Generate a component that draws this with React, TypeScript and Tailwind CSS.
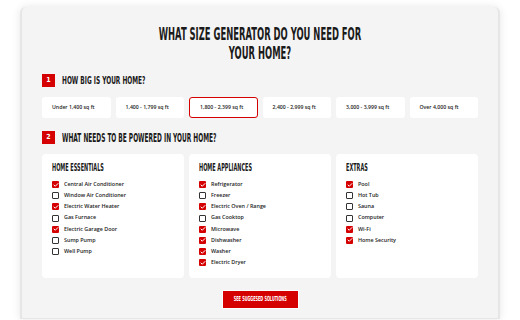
import { Check } from 'lucide-react'

const condensed = "font-['Liberation_Sans_Narrow','DejaVu_Sans_Condensed',sans-serif] font-bold"
const body = "font-['Open_Sans','Noto_Sans',sans-serif]"

const sizes = [
  'Under 1,400 sq ft',
  '1,400 - 1,799 sq ft',
  '1,800 - 2,399 sq ft',
  '2,400 - 2,999 sq ft',
  '3,000 - 3,999 sq ft',
  'Over 4,000 sq ft',
]

const groups = [
  {
    title: 'HOME ESSENTIALS',
    items: [
      ['Central Air Conditioner', true],
      ['Window Air Conditioner', false],
      ['Electric Water Heater', true],
      ['Gas Furnace', false],
      ['Electric Garage Door', true],
      ['Sump Pump', false],
      ['Well Pump', false],
    ],
  },
  {
    title: 'HOME APPLIANCES',
    items: [
      ['Refrigerator', true],
      ['Freezer', false],
      ['Electric Oven / Range', true],
      ['Gas Cooktop', false],
      ['Microwave', true],
      ['Dishwasher', true],
      ['Washer', true],
      ['Electric Dryer', true],
    ],
  },
  {
    title: 'EXTRAS',
    items: [
      ['Pool', true],
      ['Hot Tub', false],
      ['Sauna', false],
      ['Computer', false],
      ['Wi-Fi', true],
      ['Home Security', true],
    ],
  },
] as { title: string; items: [string, boolean][] }[]

const StepLabel = ({ n, text, big }: { n: number; text: string; big?: boolean }) => (
  <div className="flex h-[13px] items-center gap-[7px]">
    <div className={`flex h-[13px] w-[13px] items-center justify-center bg-[#d50000] text-[7px] leading-none text-white ${condensed}`}>
      {n}
    </div>
    <span
      className={`block origin-left whitespace-nowrap leading-[13px] text-[#1a1a1a] ${condensed} ${
        big ? 'text-[13px] scale-x-[0.5]' : 'text-[11px] scale-x-[0.59]'
      }`}
    >
      {text}
    </span>
  </div>
)

export default function App() {
  return (
    <div className="h-[320px] w-[520px] overflow-hidden bg-white">
      <div className="mx-[20px] mt-[7px] h-[312px] rounded-t-[6px] border-x-2 border-b border-[#e6e6e6] bg-[#f4f4f4] px-[20px] pt-[17px] shadow-[0_0_8px_rgba(0,0,0,0.1)]">
        <h1 className={`text-center text-[18px] leading-[19px] text-[#1a1a1a] ${condensed}`}>
          <span className="block scale-x-[0.52] whitespace-nowrap">WHAT SIZE GENERATOR DO YOU NEED FOR</span>
          <span className="block scale-x-[0.52] whitespace-nowrap">YOUR HOME?</span>
        </h1>

        <div className="mt-[12px]">
          <StepLabel n={1} text="HOW BIG IS YOUR HOME?" />
        </div>

        <div className="mt-[10px] grid grid-cols-6 gap-[5px]">
          {sizes.map((s, i) => (
            <div
              key={s}
              className={`flex h-[21px] items-center rounded-[3px] bg-white pl-[10px] text-[5.2px] leading-none font-semibold text-[#222] ${body} ${
                i === 2 ? 'border border-[#d50000] pl-[9px]' : ''
              }`}
            >
              {s}
            </div>
          ))}
        </div>

        <div className="mt-[13px]">
          <StepLabel n={2} text="WHAT NEEDS TO BE POWERED IN YOUR HOME?" big />
        </div>

        <div className="mt-[10px] grid grid-cols-3 gap-[5px]">
          {groups.map((g) => (
            <div key={g.title} className="h-[124px] rounded-[4px] bg-white px-[10px] pt-[9px]">
              <div className={`block origin-left whitespace-nowrap text-[10px] leading-[10px] text-[#1a1a1a] scale-x-[0.55] ${condensed}`}>
                {g.title}
              </div>
              <div className="mt-[8px] flex flex-col gap-[4.2px]">
                {g.items.map(([label, on]) => (
                  <div key={label} className="flex h-[7px] items-center gap-[5px]">
                    <div
                      className={`flex h-[7px] w-[7px] shrink-0 items-center justify-center rounded-[1px] ${
                        on ? 'bg-[#d50000]' : 'border border-[#333] bg-white'
                      }`}
                    >
                      {on && <Check size={6} strokeWidth={4} color="white" />}
                    </div>
                    <span className={`whitespace-nowrap text-[5.4px] leading-none font-semibold text-[#222] ${body}`}>{label}</span>
                  </div>
                ))}
              </div>
            </div>
          ))}
        </div>

        <div className="mt-[12px] flex justify-center">
          <button className="flex h-[19px] w-[77px] items-center justify-center border border-white bg-[#d50000] text-[7px] leading-none text-white">
            <span className={`block whitespace-nowrap scale-x-[0.55] ${condensed}`}>SEE SUGGESED SOLUTIONS</span>
          </button>
        </div>
      </div>
    </div>
  )
}
